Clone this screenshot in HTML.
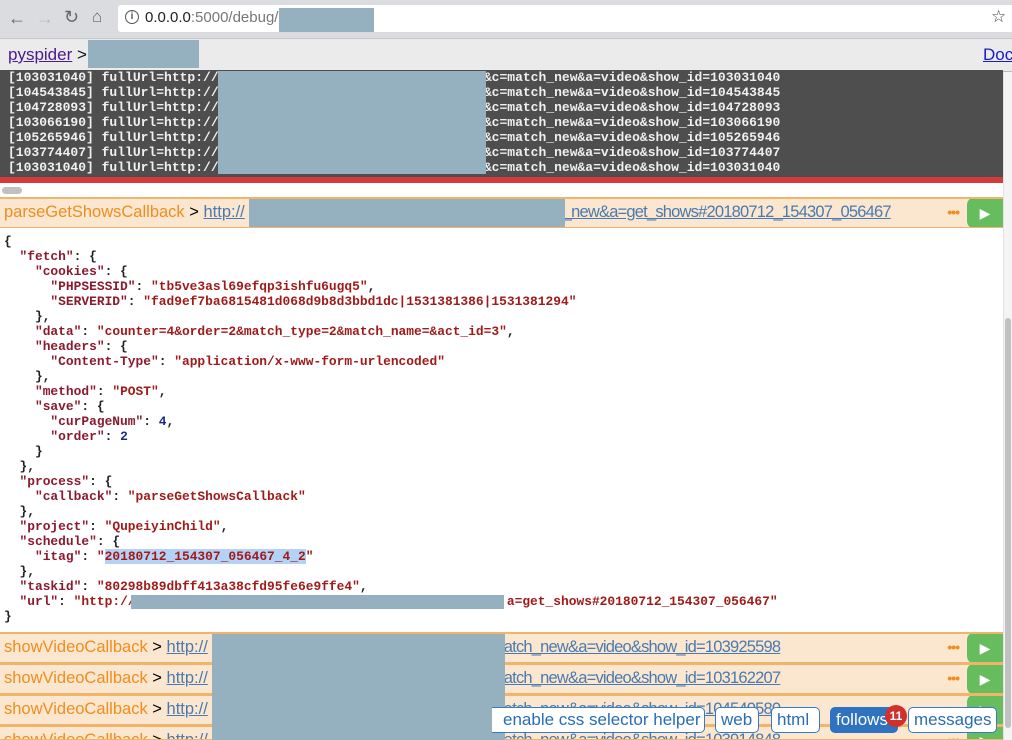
<!DOCTYPE html>
<html><head><meta charset="utf-8"><style>
*{margin:0;padding:0;box-sizing:border-box}
html,body{width:1012px;height:740px;overflow:hidden}
body{position:relative;background:#fff;font-family:"Liberation Sans",sans-serif}
.abs{position:absolute}
.red{background:#95b1bf}
.top{left:0;top:0;width:1012px;height:38px;background:#dadcdf}
.addr{left:118px;top:5px;width:894px;height:27px;background:#fff;border-radius:3px 0 0 3px}
.nav{left:0;top:38px;width:1012px;height:34px;background:#ebebeb;border-top:1px solid #c8c8c8;border-bottom:1px solid #bbb}
.log{left:0;top:70px;width:1003px;height:108px;background:#4e4e4e;font-family:"Liberation Mono",monospace;font-size:13px;font-weight:bold;color:#f0f0f0;line-height:15px;padding-left:8px;white-space:pre;overflow:hidden}
.redbar{left:0;top:177px;width:1003px;height:6px;background:#d43b3b}
.row{left:0;width:1003px;height:31px;background:#fbe7cf;border-top:2px solid #f0b46a;border-bottom:1px solid #f0b46a;font-size:16.5px;line-height:27px;padding-left:4px;white-space:pre;overflow:hidden}
.row .cb{color:#ef8d1e}
.row .u{color:#4a7ab0;text-decoration:underline}
.row .t{letter-spacing:-0.8px}
.row .sp{display:inline-block}
.row .dots{position:absolute;right:44px;top:0;color:#ef8d1e;font-weight:bold;font-size:14px;letter-spacing:-1px}
.row .play{position:absolute;right:0;top:-2px;width:36px;height:32px;background:#67bd5e;color:#fff;text-align:center;line-height:32px;font-size:14px;border-radius:8px 0 0 8px}
pre{font-family:"Liberation Mono",monospace;font-size:12.9px;line-height:15px;color:#222;font-weight:bold}
.k{color:#8a1a2e}.s{color:#a11a1a}.n{color:#1a2a8a}
.btn{top:707px;height:26px;border:1px solid #3a7bc0;border-radius:5px;background:#fff;color:#2a6db5;font-size:17px;line-height:24px;padding:0 5px;white-space:nowrap}
</style></head><body>
<div class="abs top"></div>
<div class="abs" style="left:8px;top:8px;font-size:18px;color:#666">&#8592;</div>
<div class="abs" style="left:36px;top:8px;font-size:18px;color:#bbb">&#8594;</div>
<div class="abs" style="left:64px;top:7px;font-size:18px;color:#666">&#8635;</div>
<div class="abs" style="left:92px;top:7px;font-size:17px;color:#666">&#8962;</div>
<div class="abs addr"></div>
<div class="abs" style="left:125px;top:10px;width:14px;height:14px;border:1.5px solid #555;border-radius:50%;font-size:10px;text-align:center;line-height:11px;color:#555;font-weight:bold">i</div>
<div class="abs" style="left:145px;top:9px;font-size:15px;color:#222">0.0.0.0<span style="color:#777">:5000/debug/(</span></div>
<div class="abs red" style="left:279px;top:8px;width:95px;height:24px"></div>
<div class="abs" style="left:991px;top:7px;font-size:17px;color:#444">&#9734;</div>
<div class="abs nav"></div>
<div class="abs" style="left:8px;top:45px;font-size:17px;color:#4b1a8c;text-decoration:underline">pyspider</div>
<div class="abs" style="left:77px;top:45px;font-size:17px;color:#111">&gt;</div>
<div class="abs red" style="left:88px;top:40px;width:111px;height:28px"></div>
<div class="abs" style="left:983px;top:45px;font-size:17px;color:#1a1acc;text-decoration:underline">Doc</div>
<div class="abs log">[103031040] fullUrl=http://                                  &amp;c=match_new&amp;a=video&amp;show_id=103031040
[104543845] fullUrl=http://                                  &amp;c=match_new&amp;a=video&amp;show_id=104543845
[104728093] fullUrl=http://                                  &amp;c=match_new&amp;a=video&amp;show_id=104728093
[103066190] fullUrl=http://                                  &amp;c=match_new&amp;a=video&amp;show_id=103066190
[105265946] fullUrl=http://                                  &amp;c=match_new&amp;a=video&amp;show_id=105265946
[103774407] fullUrl=http://                                  &amp;c=match_new&amp;a=video&amp;show_id=103774407
[103031040] fullUrl=http://                                  &amp;c=match_new&amp;a=video&amp;show_id=103031040</div>
<div class="abs red" style="left:218px;top:71px;width:268px;height:103px"></div>
<div class="abs redbar"></div>
<div class="abs" style="left:1003px;top:72px;width:9px;height:668px;background:#f4f4f4;border-left:1px solid #e2e2e2"></div>
<div class="abs" style="left:1005px;top:318px;width:6px;height:410px;background:#c1c1c1;border-radius:3px"></div>
<div class="abs" style="left:2px;top:187px;width:20px;height:7px;background:#c1c1c1;border-radius:4px"></div>

<div class="abs row" style="top:197px"><span class="cb">parseGetShowsCallback</span> &gt; <span class="u">http://<span class="sp" style="width:318px"></span><span class="t">_new&amp;a=get_shows#20180712_154307_056467</span></span><span class="dots">•••</span><span class="play">&#9654;</span></div>
<div class="abs red" style="left:249px;top:199px;width:316px;height:28px"></div>

<pre class="abs" style="left:4px;top:234px">{
  <span class="k">"fetch"</span>: {
    <span class="k">"cookies"</span>: {
      <span class="k">"PHPSESSID"</span>: <span class="s">"tb5ve3asl69efqp3ishfu6ugq5"</span>,
      <span class="k">"SERVERID"</span>: <span class="s">"fad9ef7ba6815481d068d9b8d3bbd1dc|1531381386|1531381294"</span>
    },
    <span class="k">"data"</span>: <span class="s">"counter=4&amp;order=2&amp;match_type=2&amp;match_name=&amp;act_id=3"</span>,
    <span class="k">"headers"</span>: {
      <span class="k">"Content-Type"</span>: <span class="s">"application/x-www-form-urlencoded"</span>
    },
    <span class="k">"method"</span>: <span class="s">"POST"</span>,
    <span class="k">"save"</span>: {
      <span class="k">"curPageNum"</span>: <span class="n">4</span>,
      <span class="k">"order"</span>: <span class="n">2</span>
    }
  },
  <span class="k">"process"</span>: {
    <span class="k">"callback"</span>: <span class="s">"parseGetShowsCallback"</span>
  },
  <span class="k">"project"</span>: <span class="s">"QupeiyinChild"</span>,
  <span class="k">"schedule"</span>: {
    <span class="k">"itag"</span>: <span class="s">"<span style="background:#b4d2f5">20180712_154307_056467_4_2</span>"</span>
  },
  <span class="k">"taskid"</span>: <span class="s">"80298b89dbff413a38cfd95fe6e9ffe4"</span>,
  <span class="k">"url"</span>: <span class="s">"http://                                                a=get_shows#20180712_154307_056467"</span>
}</pre>
<div class="abs red" style="left:131px;top:595px;width:373px;height:14px"></div>

<div class="abs row" style="top:632px"><span class="cb">showVideoCallback</span> &gt; <span class="u">http://<span class="sp" style="width:296px"></span><span class="t">atch_new&amp;a=video&amp;show_id=103925598</span></span><span class="dots">•••</span><span class="play">&#9654;</span></div>
<div class="abs row" style="top:663px"><span class="cb">showVideoCallback</span> &gt; <span class="u">http://<span class="sp" style="width:296px"></span><span class="t">atch_new&amp;a=video&amp;show_id=103162207</span></span><span class="dots">•••</span><span class="play">&#9654;</span></div>
<div class="abs row" style="top:694px"><span class="cb">showVideoCallback</span> &gt; <span class="u">http://<span class="sp" style="width:296px"></span><span class="t">atch_new&amp;a=video&amp;show_id=104540580</span></span><span class="dots">•••</span><span class="play">&#9654;</span></div>
<div class="abs row" style="top:725px;height:15px"><span class="cb">showVideoCallback</span> &gt; <span class="u">http://<span class="sp" style="width:296px"></span><span class="t">atch_new&amp;a=video&amp;show_id=103914848</span></span><span class="dots">•••</span><span class="play">&#9654;</span></div>
<div class="abs red" style="left:212px;top:634px;width:293px;height:106px"></div>

<div class="abs btn" style="left:492px;width:213px;border-left:none;border-radius:0 5px 5px 0;padding-left:11px">enable css selector helper</div>
<div class="abs btn" style="left:715px;width:44px">web</div>
<div class="abs btn" style="left:771px;width:49px">html</div>
<div class="abs btn" style="left:830px;background:#2f72c0;color:#fff;border-color:#2f72c0;width:68px">follows</div>
<div class="abs" style="left:885px;top:705px;width:22px;height:22px;border-radius:50%;background:#d0312d;color:#fff;font-size:12px;font-weight:bold;text-align:center;line-height:22px">11</div>
<div class="abs btn" style="left:908px;width:89px">messages</div>
</body></html>
